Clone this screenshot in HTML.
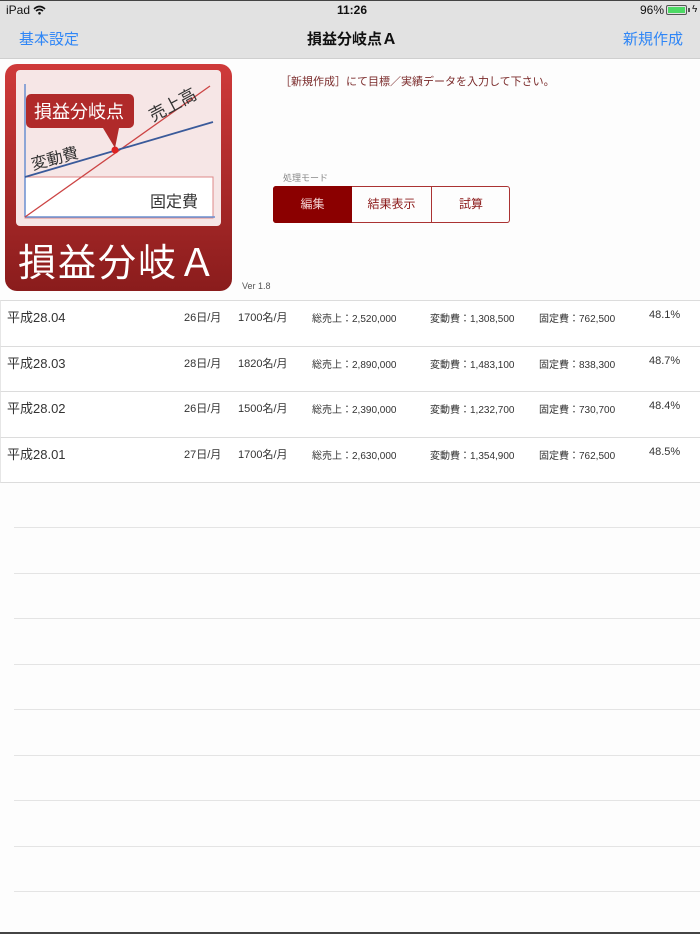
<!DOCTYPE html>
<html><head><meta charset="utf-8">
<style>
*{margin:0;padding:0;box-sizing:border-box}
body{width:700px;height:934px;background:#fdfdfd;font-family:"Liberation Sans","Noto Sans CJK JP",sans-serif;position:relative;overflow:hidden;color:#333}
.abs{position:absolute}
#top{left:0;top:0;width:700px;height:59px;background:#e2e2e2;border-top:1px solid #444;border-bottom:1px solid #cfcfcf}
.st{font-size:12px;color:#111;top:3px}
.nav{font-size:15px;top:28px}
.blue{color:#2f86f6}
.row{left:0;width:700px;height:46px;border-top:1px solid #dcdcdc;border-left:1px solid #e6e6e6;background:#fff}
.row span{position:absolute;top:8px;white-space:nowrap;color:#333}
.row span.d{top:6px}
.row span.p{top:8px}
.line{left:14px;width:686px;height:1px;background:#e4e4e4}
.seg{position:absolute;top:186px;height:37px;font-size:12px;color:#8b1a1a;text-align:center;line-height:36px}
</style></head><body>
<div id="top" class="abs"></div>
<div class="abs st" style="left:6px">iPad <svg width="13" height="10" viewBox="0 0 13 10" style="vertical-align:-1px"><path d="M1 4 Q6.5 -1 12 4" stroke="#111" stroke-width="1.6" fill="none"/><path d="M3 6 Q6.5 3 10 6" stroke="#111" stroke-width="1.6" fill="none"/><circle cx="6.5" cy="8.3" r="1.3" fill="#111"/></svg></div>
<div class="abs st" style="left:337px;font-weight:bold">11:26</div>
<div class="abs st" style="left:640px">96%</div>
<div class="abs" style="left:666px;top:5px;width:21px;height:10px;border:1px solid #555;border-radius:2px;padding:1px"><div style="width:100%;height:100%;background:#4cd964"></div></div>
<div class="abs" style="left:688px;top:8px;width:2px;height:4px;background:#555"></div>
<div class="abs" style="left:692px;top:4px;font-size:10px;color:#111">ϟ</div>
<div class="abs nav blue" style="left:19px">基本設定</div>
<div class="abs nav" style="left:307px;font-weight:bold;color:#111">損益分岐点Ａ</div>
<div class="abs nav blue" style="left:623px">新規作成</div>

<svg class="abs" style="left:5px;top:64px" width="228" height="228" viewBox="0 0 228 228">
<defs><linearGradient id="g" x1="0" y1="0" x2="0" y2="1"><stop offset="0" stop-color="#cf3a3a"/><stop offset="1" stop-color="#8a1c1c"/></linearGradient></defs>
<rect x="0" y="0" width="227" height="227" rx="12" fill="url(#g)"/>
<rect x="11" y="6" width="205" height="156" rx="4" fill="#f6e6e6"/>
<rect x="20" y="113" width="188" height="41" fill="#fff" stroke="#d88" stroke-width="1"/>
<line x1="20" y1="20" x2="20" y2="153" stroke="#6a8fd0" stroke-width="1.5"/>
<line x1="20" y1="153" x2="210" y2="153" stroke="#6a8fd0" stroke-width="1.5"/>
<line x1="20" y1="153" x2="205" y2="22" stroke="#c44" stroke-width="1.3"/>
<line x1="20" y1="113" x2="208" y2="58" stroke="#3a5a9a" stroke-width="1.8"/>
<circle cx="110" cy="86" r="3.5" fill="#d22"/>
<path d="M26 30 h98 a5 5 0 0 1 5 5 v24 a5 5 0 0 1 -5 5 h-10 l-4 20 l-12 -20 h-72 a5 5 0 0 1 -5 -5 v-24 a5 5 0 0 1 5 -5z" fill="#b02a2a"/>
<text x="29" y="54" font-size="18" fill="#fff" font-family="Noto Sans CJK JP">損益分岐点</text>
<text x="148" y="58" font-size="17" fill="#333" font-family="Noto Sans CJK JP" transform="rotate(-28 148 58)">売上高</text>
<text x="28" y="106" font-size="16" fill="#333" font-family="Noto Sans CJK JP" transform="rotate(-15 28 106)">変動費</text>
<text x="145" y="143" font-size="16" fill="#333" font-family="Noto Sans CJK JP">固定費</text>
<text x="13" y="212" font-size="38" fill="#fff" font-family="Noto Sans CJK JP" letter-spacing="2">損益分岐Ａ</text>
</svg>

<div class="abs" style="left:280px;top:73px;font-size:11px;color:#7a2a2a">［新規作成］にて目標／実績データを入力して下さい。</div>
<div class="abs" style="left:283px;top:171px;font-size:9px;color:#888">処理モード</div>
<div class="abs" style="left:273px;top:186px;width:237px;height:37px;border:1px solid #a33;border-radius:3px"></div>
<div class="seg" style="left:273px;width:79px;background:#8b0000;color:#f3d0d0;border-radius:3px 0 0 3px">編集</div>
<div class="abs" style="left:431px;top:186px;width:1px;height:37px;background:#a33"></div>
<div class="seg" style="left:352px;width:79px">結果表示</div>
<div class="seg" style="left:432px;width:78px">試算</div>
<div class="abs" style="left:242px;top:281px;font-size:9px;color:#555">Ver 1.8</div>

<div class="row abs" style="top:300px"><span class="d" style="left:6px;font-size:13px">平成28.04</span><span style="left:183px;font-size:11px">26日/月</span><span style="left:237px;font-size:11px">1700名/月</span><span style="left:311px;font-size:10px;top:9px">総売上：2,520,000</span><span style="left:429px;font-size:10px;top:9px">変動費：1,308,500</span><span style="left:538px;font-size:10px;top:9px">固定費：762,500</span><span class="p" style="left:648px;font-size:11px">48.1%</span></div>
<div class="row abs" style="top:346px"><span class="d" style="left:6px;font-size:13px">平成28.03</span><span style="left:183px;font-size:11px">28日/月</span><span style="left:237px;font-size:11px">1820名/月</span><span style="left:311px;font-size:10px;top:9px">総売上：2,890,000</span><span style="left:429px;font-size:10px;top:9px">変動費：1,483,100</span><span style="left:538px;font-size:10px;top:9px">固定費：838,300</span><span class="p" style="left:648px;font-size:11px">48.7%</span></div>
<div class="row abs" style="top:391px"><span class="d" style="left:6px;font-size:13px">平成28.02</span><span style="left:183px;font-size:11px">26日/月</span><span style="left:237px;font-size:11px">1500名/月</span><span style="left:311px;font-size:10px;top:9px">総売上：2,390,000</span><span style="left:429px;font-size:10px;top:9px">変動費：1,232,700</span><span style="left:538px;font-size:10px;top:9px">固定費：730,700</span><span class="p" style="left:648px;font-size:11px">48.4%</span></div>
<div class="row abs" style="top:437px;border-bottom:1px solid #dcdcdc"><span class="d" style="left:6px;font-size:13px">平成28.01</span><span style="left:183px;font-size:11px">27日/月</span><span style="left:237px;font-size:11px">1700名/月</span><span style="left:311px;font-size:10px;top:9px">総売上：2,630,000</span><span style="left:429px;font-size:10px;top:9px">変動費：1,354,900</span><span style="left:538px;font-size:10px;top:9px">固定費：762,500</span><span class="p" style="left:648px;font-size:11px">48.5%</span></div>

<div class="line abs" style="top:527px"></div>
<div class="line abs" style="top:573px"></div>
<div class="line abs" style="top:618px"></div>
<div class="line abs" style="top:664px"></div>
<div class="line abs" style="top:709px"></div>
<div class="line abs" style="top:755px"></div>
<div class="line abs" style="top:800px"></div>
<div class="line abs" style="top:846px"></div>
<div class="line abs" style="top:891px"></div>
<div class="abs" style="left:0;top:932px;width:700px;height:2px;background:#444"></div>
</body></html>
